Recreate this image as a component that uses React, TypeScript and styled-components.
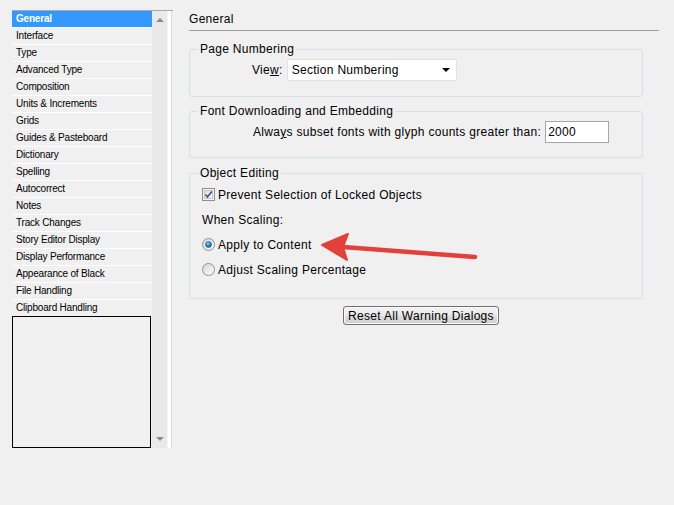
import React from 'react';
import styled, { createGlobalStyle } from 'styled-components';

const GlobalStyle = createGlobalStyle`
    html, body {
        margin: 0;
        padding: 0;
        background: #f0f0f0;
    }
    body {
        width: 674px;
        height: 505px;
        overflow: hidden;
        font-family: "Liberation Sans", Arial, sans-serif;
        color: #000;
    }
`

const Page = styled.div`
    position: relative;
    display: flex;
    align-items: flex-start;
    gap: 16px;
    padding: 10px 0 0 12px;
    width: 674px;
    height: 505px;
    box-sizing: border-box;
`

const Sidebar = styled.div`
    display: flex;
    width: 161px;
    height: 437px;
    border-top: 1px solid #a9a9a9;
`
const ListColumn = styled.div`
    display: flex;
    flex-direction: column;
    width: 140px;
`
const ListItem = styled.div<{ selected?: boolean }>`
    height: 16px;
    line-height: 16px;
    padding-left: 4px;
    border-bottom: 1px solid #ffffff;
    font-size: 10px;
    letter-spacing: -0.2px;
    white-space: nowrap;
    background: ${p => p.selected ? '#3399ff' : 'transparent'};
    color: ${p => p.selected ? '#ffffff' : '#000000'};
    font-weight: ${p => p.selected ? 'bold' : 'normal'};
`
const EmptyBox = styled.div`
    flex: 1;
    border: 1px solid #000;
    margin-top: -1px;
    width: 137px;
`
const ScrollTrack = styled.div`
    display: flex;
    flex-direction: column;
    justify-content: space-between;
    align-items: center;
    width: 16px;
    background: #e9e9e9;
    border-right: 1px solid #f6f6f6;
    padding: 7px 0 7px;
    box-sizing: border-box;
`
const ScrollEdge = styled.div`
    width: 3px;
    background: #ffffff;
    border-right: 1px solid #dedede;
`
const ScrollArrow = styled.div<{ down?: boolean }>`
    width: 0;
    height: 0;
    border-left: 4px solid transparent;
    border-right: 4px solid transparent;
    ${p => p.down ? 'border-top: 4px solid #8a8a8a;' : 'border-bottom: 4px solid #8a8a8a;'}
`

const Main = styled.div`
    display: flex;
    flex-direction: column;
    width: 470px;
    font-size: 12px;
    letter-spacing: 0.3px;
`
const Header = styled.div`
    height: 20px;
    line-height: 18px;
    border-bottom: 1px solid #a0a0a0;
    margin-bottom: 10px;
`
const Group = styled.fieldset<{ space: number }>`
    width: 454px;
    box-sizing: border-box;
    margin: 0 0 ${p => p.space}px 0;
    padding: 0 12px;
    border: 1px solid #d5dfe5;
    border-radius: 3px;
    min-width: 0;
`
const Legend = styled.legend`
    padding: 0 2px;
    margin-left: -4px;
    line-height: 16px;
    font-size: 12px;
`
const FieldRow = styled.div<{ indent: number; bottom: number }>`
    display: flex;
    align-items: center;
    gap: 4px;
    margin-top: 2px;
    padding-left: ${p => p.indent}px;
    padding-bottom: ${p => p.bottom}px;
`
const Select = styled.div`
    display: flex;
    align-items: center;
    justify-content: space-between;
    width: 170px;
    height: 22px;
    box-sizing: border-box;
    padding: 0 6px 0 4px;
    background: #ffffff;
    border: 1px solid #e2e2e2;
`
const Caret = styled.span`
    width: 0;
    height: 0;
    border-left: 4px solid transparent;
    border-right: 4px solid transparent;
    border-top: 4px solid #000;
`
const TextInput = styled.div`
    width: 64px;
    height: 22px;
    line-height: 20px;
    box-sizing: border-box;
    padding-left: 2px;
    background: #ffffff;
    border: 1px solid #a6a6a6;
`
const OptionList = styled.div`
    display: flex;
    flex-direction: column;
    padding-bottom: 16px;
    margin-top: 1px;
`
const OptionRow = styled.div`
    display: flex;
    align-items: center;
    gap: 3px;
    height: 25px;
`
const ButtonRow = styled.div`
    display: flex;
    padding-left: 154px;
`
const Button = styled.button`
    width: 156px;
    height: 19px;
    padding: 0;
    font-family: "Liberation Sans", Arial, sans-serif;
    font-size: 12px;
    letter-spacing: 0.3px;
    color: #000;
    border: 1px solid #707070;
    border-radius: 3px;
    background: linear-gradient(#f2f2f2 0%, #ebebeb 45%, #dddddd 55%, #cfcfcf 100%);
    box-shadow: inset 0 0 0 1px #fcfcfc;
`
const Annotation = styled.svg`
    position: absolute;
    left: 0;
    top: 0;
    pointer-events: none;
`

const CheckBox = () => (
    <svg width="13" height="13" viewBox="0 0 13 13">
        <defs>
            <linearGradient id="cb" x1="0" y1="0" x2="1" y2="1">
                <stop offset="0" stopColor="#dcdcdc" />
                <stop offset="1" stopColor="#fbfbfb" />
            </linearGradient>
        </defs>
        <rect x="0.5" y="0.5" width="12" height="12" fill="#f4f4f4" stroke="#8e8f8f" />
        <rect x="2.5" y="2.5" width="8" height="8" fill="url(#cb)" stroke="#c6c6c6" />
        <path d="M3.5 6.5 L5.5 9 L9.8 3.6" fill="none" stroke="#3b4f8a" strokeWidth="1.6" />
    </svg>
);

const Radio = ({ checked }: { checked?: boolean }) => (
    <svg width="13" height="13" viewBox="0 0 13 13">
        <defs>
            <radialGradient id="rd" cx="0.4" cy="0.35" r="0.7">
                <stop offset="0" stopColor="#9fd6f7" />
                <stop offset="0.5" stopColor="#2a8ad4" />
                <stop offset="1" stopColor="#0d4a87" />
            </radialGradient>
            <linearGradient id="rb" x1="0" y1="0" x2="1" y2="1">
                <stop offset="0" stopColor="#d6d6d6" />
                <stop offset="1" stopColor="#fdfdfd" />
            </linearGradient>
        </defs>
        <circle cx="6.5" cy="6.5" r="6" fill="url(#rb)" stroke="#8e8f8f" />
        {checked && <circle cx="6.5" cy="6.5" r="3" fill="url(#rd)" stroke="#1f5c99" strokeWidth="0.6" />}
    </svg>
);

const sections = [
    'General', 'Interface', 'Type', 'Advanced Type', 'Composition', 'Units & Increments',
    'Grids', 'Guides & Pasteboard', 'Dictionary', 'Spelling', 'Autocorrect', 'Notes',
    'Track Changes', 'Story Editor Display', 'Display Performance', 'Appearance of Black',
    'File Handling', 'Clipboard Handling',
];

const App: React.FC = () => {
    return (
        <Page>
            <GlobalStyle />
            <Sidebar>
                <ListColumn>
                    {sections.map(s => (
                        <ListItem key={s} selected={s === 'General'}>{s}</ListItem>
                    ))}
                    <EmptyBox />
                </ListColumn>
                <ScrollTrack>
                    <ScrollArrow />
                    <ScrollArrow down />
                </ScrollTrack>
                <ScrollEdge />
            </Sidebar>
            <Main>
                <Header>General</Header>
                <Group space={6}>
                    <Legend>Page Numbering</Legend>
                    <FieldRow indent={50} bottom={15}>
                        <span>Vie<u>w</u>:</span>
                        <Select>
                            <span>Section Numbering</span>
                            <Caret />
                        </Select>
                    </FieldRow>
                </Group>
                <Group space={7}>
                    <Legend>Font Downloading and Embedding</Legend>
                    <FieldRow indent={51} bottom={14}>
                        <span>Alwa<u>y</u>s subset fonts with glyph counts greater than:</span>
                        <TextInput>2000</TextInput>
                    </FieldRow>
                </Group>
                <Group space={7}>
                    <Legend>Object Editing</Legend>
                    <OptionList>
                        <OptionRow><CheckBox /><span>Prevent Selection of Locked Objects</span></OptionRow>
                        <OptionRow><span>When Scaling:</span></OptionRow>
                        <OptionRow><Radio checked /><span>Apply to Content</span></OptionRow>
                        <OptionRow><Radio /><span>Adjust Scaling Percentage</span></OptionRow>
                    </OptionList>
                </Group>
                <ButtonRow>
                    <Button>Reset All Warning Dialogs</Button>
                </ButtonRow>
            </Main>
            <Annotation width="674" height="505" viewBox="0 0 674 505">
                <path d="M343 247 L475 257" stroke="#e2403a" strokeWidth="4.5" strokeLinecap="round" />
                <path d="M322 245 L348 234 L343 247 L347 260 Z" fill="#e2403a" stroke="#e2403a" strokeWidth="2" strokeLinejoin="round" />
            </Annotation>
        </Page>
    );
}

export default App;
